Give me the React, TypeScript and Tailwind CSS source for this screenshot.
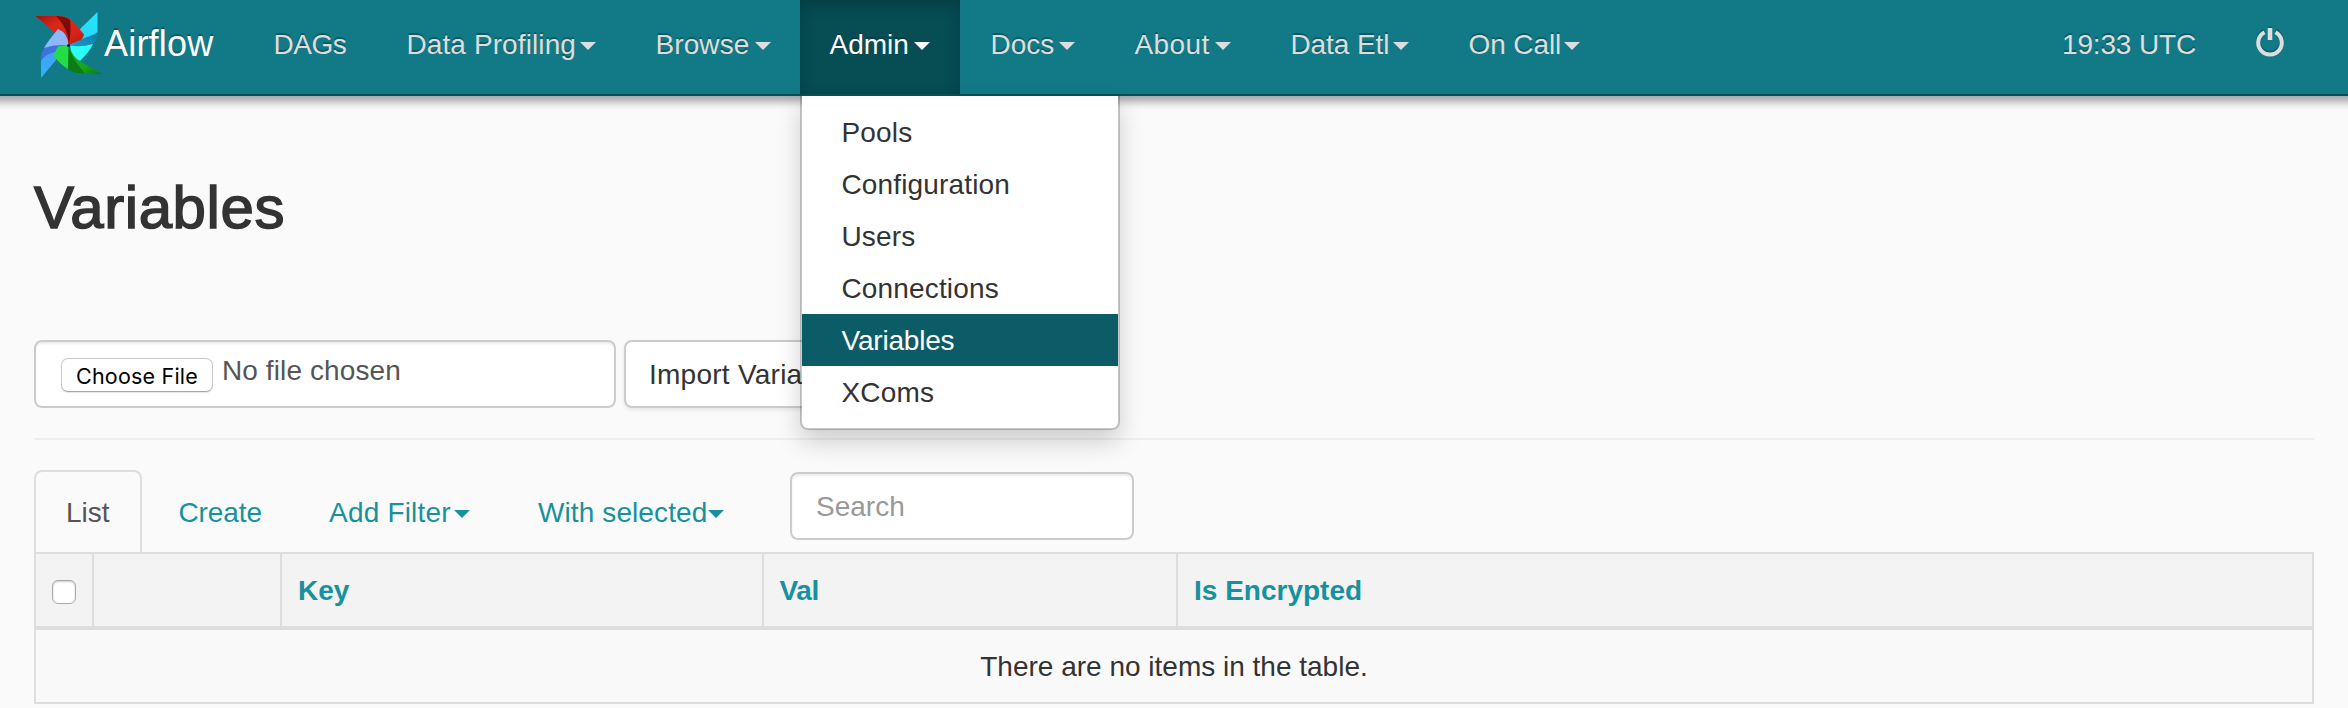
import React from "react";

type NavItem = { label: string; box: string; text?: string; caret?: boolean; active?: boolean };

const navItems: NavItem[] = [
  { label: "DAGs", box: "w-[133px]", text: "tracking-[-0.5px]" },
  { label: "Data Profiling", box: "w-[249px]", text: "tracking-[0.1px]", caret: true },
  { label: "Browse", box: "w-[175px]", text: "tracking-[0.1px]", caret: true },
  { label: "Admin", box: "w-[160px]", caret: true, active: true },
  { label: "Docs", box: "w-[144px]", caret: true },
  { label: "About", box: "w-[156px]", text: "tracking-[0.4px]", caret: true },
  { label: "Data Etl", box: "w-[178px]", text: "tracking-[-0.1px]", caret: true },
  { label: "On Call", box: "w-[171px]", text: "tracking-[-0.1px]", caret: true },
];

const menuItems = ["Pools", "Configuration", "Users", "Connections", "Variables", "XComs"];

function Caret({ className = "" }: { className?: string }) {
  return (
    <span
      className={`h-0 w-0 shrink-0 border-x-8 border-t-8 border-x-transparent border-t-current ${className}`}
    />
  );
}

function Pinwheel() {
  return (
    <svg width="68" height="68" viewBox="0 0 68 68" className="shrink-0">
      <defs>
        <linearGradient id="red" x1="0" y1="0" x2="1" y2="1">
          <stop offset="0" stopColor="#a01008" />
          <stop offset="0.35" stopColor="#dc261a" />
          <stop offset="0.7" stopColor="#d82418" />
          <stop offset="1" stopColor="#b01a10" />
        </linearGradient>
        <linearGradient id="darkred" x1="0" y1="0" x2="1" y2="1">
          <stop offset="0" stopColor="#8a0d06" />
          <stop offset="1" stopColor="#6e0c06" />
        </linearGradient>
        <linearGradient id="cyan" x1="1" y1="0" x2="0" y2="1">
          <stop offset="0" stopColor="#22e6ff" />
          <stop offset="1" stopColor="#2ccdf5" />
        </linearGradient>
        <linearGradient id="teal" x1="1" y1="0" x2="0" y2="1">
          <stop offset="0" stopColor="#0f78a8" />
          <stop offset="1" stopColor="#1e9bc8" />
        </linearGradient>
        <linearGradient id="green" x1="0" y1="0" x2="1" y2="1">
          <stop offset="0" stopColor="#1fae1f" />
          <stop offset="0.6" stopColor="#17a51c" />
          <stop offset="1" stopColor="#0a7a12" />
        </linearGradient>
        <linearGradient id="blue" x1="1" y1="0" x2="0" y2="1">
          <stop offset="0" stopColor="#4a9cf6" />
          <stop offset="1" stopColor="#2fb0ff" />
        </linearGradient>
      </defs>
      <path d="M63.500 1V21L61 24Q53 27 44 31L36 34Q40 27 46 18Z" fill="url(#cyan)" />
      <path d="M63.500 21Q64 29 58 33Q46 37 36 34.500Q44 29 53 26Q60 24 63.500 21Z" fill="url(#teal)" />
      <path d="M36 34.500Q47 36.500 59 33Q56 40 46 50Q37 46 36 34.500Z" fill="#2cfdfa" />
      <path d="M1.500 5H26Q33 5.500 36 8Q43 14 50 23.500Q49 29 44 30L35 34Q22 23 12 14Z" fill="url(#red)" />
      <path d="M22 5Q31 5 36 9Q37.500 19 35 33Q34 17 22 5Z" fill="url(#darkred)" />
      <path d="M7 67V47L14 42L22 40V49Z" fill="url(#blue)" />
      <path d="M7 50Q6 42 11 36.500Q24 33 34 34.500Q28 39 19 41.500Q10 44 7 50Z" fill="#3f72e0" />
      <path d="M10 37Q14 30 24 18Q34 22 34.500 34.500Q22 33 10 37Z" fill="#8fb8fb" />
      <path d="M48 51.500Q58 57 68 63H45Q39 62 36 59L35 36Q40 48 48 51.500Z" fill="url(#green)" />
      <path d="M34.500 35Q38 48 51 62.500H45Q38 62 33.500 57Z" fill="#0b7d16" />
      <path d="M34.500 35L34 58Q27 54 19.500 45Q22 38 24 35.500Q30 34 34.500 35Z" fill="#22dd46" />
      <circle cx="34.600" cy="34.500" r="1.500" fill="#08202a" />
    </svg>
  );
}

function Navbar() {
  return (
    <nav className="relative z-10 flex h-24 w-full items-start border-b-2 border-[#0a4f57] bg-[#117a86] text-[#dddddd] shadow-[0_-4px_8px_10px_rgba(0,0,0,0.34)]">
      <a className="flex h-[94px] w-[210px] shrink-0 items-start pt-[11px] pl-[34px] text-[36px] leading-10 text-white">
        <Pinwheel />
        <span className="mt-[13px] ml-[2px] tracking-[0.2px] text-shadow-[0_-2px_0_rgba(0,0,0,0.25)]">Airflow</span>
      </a>
      <ul className="flex pl-[34px]">
        {navItems.map((item) => (
          <li key={item.label} className={`relative -left-px ${item.box}`}>
            <a
              className={
                item.active
                  ? "flex h-[94px] items-start bg-[#064d54] pt-6 pr-[30px] pl-[29.500px] leading-[41px] text-white shadow-[inset_0_6px_16px_rgba(0,0,0,0.2)] text-shadow-[0_-2px_0_rgba(0,0,0,0.2)]"
                  : "flex h-[94px] items-start pt-6 pr-[29px] pl-[30.500px] leading-[41px] whitespace-nowrap text-shadow-[0_-2px_0_rgba(0,0,0,0.25)]"
              }
            >
              <span className={item.text}>{item.label}</span>
              {item.caret && <Caret className="mt-[18px] ml-auto" />}
            </a>
            {item.active && (
              <ul className="absolute top-24 left-0 w-80 rounded-b-lg border-2 border-t-0 border-black/20 bg-white bg-clip-padding py-2.5 tracking-[0.15px] text-[#333333] shadow-[0_12px_24px_rgba(0,0,0,0.175)]">
                {menuItems.map((entry) => (
                  <li
                    key={entry}
                    className={
                      entry === "Variables"
                        ? "h-[52px] bg-[#0b5c66] pl-[39.500px] leading-[53px] tracking-[-0.2px] text-white"
                        : "h-[52px] pl-[39.500px] leading-[53px]"
                    }
                  >
                    {entry}
                  </li>
                ))}
              </ul>
            )}
          </li>
        ))}
      </ul>
      <div className="ml-auto flex pr-[63px]">
        <span className="pt-6 leading-[41px] tracking-[-0.15px] text-shadow-[0_-2px_0_rgba(0,0,0,0.25)]">19:33 UTC</span>
        <svg width="30" height="34" viewBox="0 0 30 34" className="mt-6 ml-[59px]" fill="none">
          <g stroke="#0d626b" transform="translate(0 -2)">
            <path d="M9.500 8.300A11.800 11.800 0 1 0 20.500 8.300" strokeWidth="4" />
            <path d="M15 4.500V15" strokeWidth="4.500" />
          </g>
          <g stroke="currentColor">
            <path d="M9.500 8.300A11.800 11.800 0 1 0 20.500 8.300" strokeWidth="4" />
            <path d="M15 4V16" strokeWidth="4.600" />
          </g>
        </svg>
      </div>
    </nav>
  );
}

function ImportForm() {
  return (
    <form className="mt-[89px] flex gap-2">
      <div className="flex h-[68px] w-[582px] rounded-lg border-2 border-[#cccccc] bg-white pt-4 pl-[25px] text-[#555555] shadow-[inset_0_2px_2px_rgba(0,0,0,0.075)]">
        <span className="h-[34px] w-[152px] rounded-[7px] border border-[#c8c8c8] border-b-[#a8a8a8] bg-white text-center font-[Inter] text-[21.500px] leading-[35px] tracking-[0.2px] text-black shadow-[0_1px_1px_rgba(0,0,0,0.1)]">
          Choose File
        </span>
        <span className="ml-[9px] leading-[25px] tracking-[0.1px]">No file chosen</span>
      </div>
      <button
        type="button"
        className="h-[68px] w-[240px] rounded-lg border-2 border-[#cccccc] bg-white pt-[2px] pl-[23px] text-left leading-[62px] tracking-[0.25px] text-[#333333] shadow-[0_2px_4px_rgba(0,0,0,0.08)]"
      >
        Import Variables
      </button>
    </form>
  );
}

function Tabs() {
  return (
    <div className="flex h-[82px] items-start text-[#17919e]">
      <div className="h-[82px] w-[108px] rounded-t-lg border-2 border-b-0 border-[#dddddd] pt-[22px] pl-[30px] leading-[38px] text-[#555555]">
        List
      </div>
      <a className="w-[152px] pt-6 pl-[36.500px] leading-[38px] tracking-[-0.1px]">Create</a>
      <a className="flex w-[176px] pt-6 pl-[35px] leading-[38px] tracking-[0.2px] whitespace-nowrap">
        Add Filter
        <Caret className="mt-4 ml-auto" />
      </a>
      <a className="flex w-[254px] pt-6 pl-[68px] leading-[38px] tracking-[0.1px] whitespace-nowrap">
        With selected
        <Caret className="mt-4 ml-auto" />
      </a>
      <div className="mt-0.5 ml-[66px] h-[68px] w-[344px] rounded-lg border-2 border-[#cccccc] bg-white pl-6 leading-[65px] text-[#999999] shadow-[inset_0_2px_2px_rgba(0,0,0,0.075)]">
        Search
      </div>
    </div>
  );
}

function VariablesTable() {
  return (
    <div className="border-2 border-[#dddddd]">
      <div className="flex h-[76px] border-b-4 border-[#dddddd] bg-[#f3f3f3] leading-[73px] font-bold text-[#17919e]">
        <div className="w-[58px] border-r-2 border-[#dddddd] pt-[26px] pl-4">
          <span className="block h-6 w-6 rounded-md border border-[#a9a9a9] bg-white shadow-[inset_0_1px_2px_rgba(0,0,0,0.2)]" />
        </div>
        <div className="w-[188px] border-r-2 border-[#dddddd]" />
        <div className="w-[482px] border-r-2 border-[#dddddd] pl-4">Key</div>
        <div className="w-[414px] border-r-2 border-[#dddddd] pl-[15.500px] tracking-[-0.3px]">Val</div>
        <div className="pl-4">Is Encrypted</div>
      </div>
      <div className="h-[72px] bg-[#f9f9f9] text-center leading-[73px]">There are no items in the table.</div>
    </div>
  );
}

export default function App() {
  return (
    <div className="h-[708px] w-full overflow-hidden bg-[#fafafa] font-['Liberation_Sans',Arial,sans-serif] text-[28px] text-[#333333]">
      <Navbar />
      <main className="px-[34px] pt-[75px]">
        <h2 className="h-20 text-[60px] leading-[73px] tracking-[0.6px] [-webkit-text-stroke:1.500px_#333333]">Variables</h2>
        <ImportForm />
        <hr className="mt-[30px] mb-[30px] border-t-2 border-[#eeeeee]" />
        <Tabs />
        <VariablesTable />
      </main>
    </div>
  );
}
